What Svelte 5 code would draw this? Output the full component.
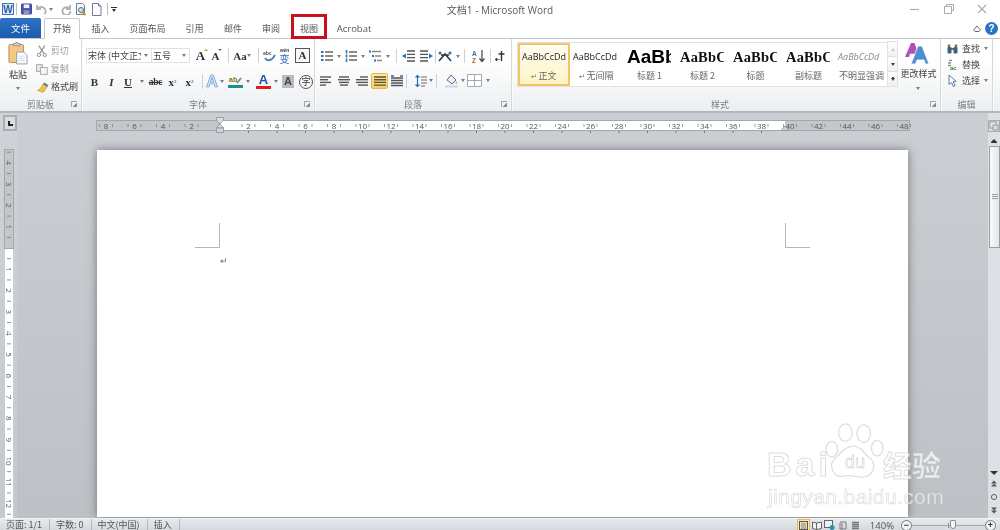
<script>
  const tabs = [
    { t: '插入', w: 39 }, { t: '页面布局', w: 55 }, { t: '引用', w: 39 },
    { t: '邮件', w: 38 }, { t: '审阅', w: 38 }, { t: '视图', w: 38 }
  ];
  const styles = [
    { p: 'AaBbCcDd', l: '正文', k: 'normal', mark: true, on: true },
    { p: 'AaBbCcDd', l: '无间隔', k: 'normal', mark: true },
    { p: 'AaBb', l: '标题 1', k: 'h1' },
    { p: 'AaBbC', l: '标题 2', k: 'h2' },
    { p: 'AaBbC', l: '标题', k: 'h2' },
    { p: 'AaBbC', l: '副标题', k: 'h2' },
    { p: 'AaBbCcDd', l: '不明显强调', k: 'em' }
  ];
  const evens = [];
  for (let v = -8; v <= 48; v += 2) if (v !== 0) evens.push(v);
  const hx = (v) => 124 + v * 14.25;
  const vNums = [-4, -3, -2, -1, 1, 2, 3, 4, 5, 6, 7, 8, 9, 10, 11, 12];
  const vy = (v) => 99 + v * 21.3;
  const vTicks = [];
  for (let v = -4.5; v <= 12.5; v += 1) vTicks.push(v);
  const aligns = [[11, 8, 11, 6], [10, 12, 10, 8], [8, 12, 12, 10]];
</script>

<div class="app">
  <header class="title">
    <div class="qat">
      <svg class="wlogo" width="12" height="12" viewBox="0 0 12 12"><rect x=".5" y=".5" width="11" height="11" fill="#dce8f7" stroke="#3f74b8"/><text x="6" y="9.5" text-anchor="middle" class="wtext">W</text></svg>
      <i class="qsep"></i>
      <svg class="q1" width="11" height="12" viewBox="0 0 12 12"><rect x=".5" y=".5" width="11" height="11" rx="1" fill="#4a57b0" stroke="#333c86"/><rect x="3" y="1" width="6" height="4" fill="#eef1fb"/><rect x="3" y="7.5" width="6" height="4" fill="#8d97c8"/></svg>
      <svg class="q2" width="13" height="11" viewBox="0 0 13 11"><path d="M3 1v4h4M3.5 4.5C6 2 10 2.5 11.5 6c.5 1.5 0 3-1 4" fill="none" stroke="#aeb1b5" stroke-width="1.8"/></svg>
      <i class="caret q3"></i>
      <svg class="q4" width="11" height="11" viewBox="0 0 11 11"><path d="M9 1v4H5M8.5 4.5A4 4 0 1 0 9.5 7" fill="none" stroke="#aeb1b5" stroke-width="1.8"/></svg>
      <svg class="q5" width="13" height="13" viewBox="0 0 13 13"><path d="M2.5.5h6l2 2v9h-8z" fill="#f6f7f9" stroke="#6d7d93"/><circle cx="7" cy="7" r="2.5" fill="#cfe0f2" stroke="#5d6a7c"/><path d="M8.5 9l3 3" stroke="#c99330" stroke-width="2"/></svg>
      <svg class="q6" width="11" height="13" viewBox="0 0 11 13"><path d="M1.5.5h6l2.5 2.5v9.5h-8.5z" fill="#fff" stroke="#6d7d93"/><path d="M7.5.5v2.5h2.5" fill="#dfe6ef" stroke="#6d7d93"/></svg>
      <i class="qsep q7"></i>
      <span class="qmore"><b></b><i class="caret dark"></i></span>
    </div>
    <div class="doc">文档1 - Microsoft Word</div>
    <div class="win">
      <svg width="10" height="10" viewBox="0 0 10 10" class="wmin"><path d="M0 5.5h9" stroke="#a9abae" stroke-width="1.2"/></svg>
      <svg width="10" height="10" viewBox="0 0 10 10" class="wmax"><path d="M2.5 2.5V.5h7v6H7.5M.5 2.5h7v7h-7z" fill="#fff" stroke="#a9abae"/></svg>
      <svg width="10" height="10" viewBox="0 0 10 10" class="wclose"><path d="M1 1l8 8M9 1l-8 8" stroke="#a9abae" stroke-width="1.1"/></svg>
    </div>
  </header>

  <nav class="tabs">
    <div class="file">文件</div>
    <div class="home">开始</div>
    {#each tabs as tab}
      <div class="tab" style="width:{tab.w}px">{tab.t}</div>
    {/each}
    <div class="tab acro">Acrobat</div>
    <div class="tabend">
      <svg width="8" height="7" viewBox="0 0 8 7"><path d="M.5 5L4 1l3.5 4-1.5 1.5H2z" fill="none" stroke="#666"/></svg>
      <span class="help">?</span>
    </div>
  </nav>

  <section class="ribbon">
    <div class="grp clip">
      <div class="body cliprow">
        <div class="paste">
          <svg width="20" height="24" viewBox="0 0 22 25"><rect x="1" y="3" width="16" height="20" rx="1.5" fill="#f4c886" stroke="#b38b4c"/><path d="M6 4V2h2.5V.8h2V2H13v2.5H6z" fill="#cdd2d8" stroke="#7f8790" stroke-width=".8"/><path d="M9.5 11.5h8l3.5 3.5v9.5H9.5z" fill="#fdfdfe" stroke="#8d99a8"/><path d="M11.5 16h7M11.5 18.5h7M11.5 21h7" stroke="#ccd3db"/></svg>
          <span class="pl">粘贴</span>
          <i class="caret"></i>
        </div>
        <div class="clipcol">
          <div class="cr off">
            <svg width="12" height="12" viewBox="0 0 12 12"><path d="M3 .5l5 8M9 .5l-5 8" stroke="#8e9196" stroke-width="1.2"/><circle cx="3" cy="10" r="1.7" fill="none" stroke="#8e9196"/><circle cx="9" cy="10" r="1.7" fill="none" stroke="#8e9196"/></svg>
            <span>剪切</span>
          </div>
          <div class="cr off">
            <svg width="12" height="12" viewBox="0 0 12 12"><rect x=".5" y="1.5" width="6" height="7" fill="#e8e9eb" stroke="#a7a9ac"/><rect x="4.5" y="4.5" width="7" height="7" fill="#f7f7f8" stroke="#a7a9ac"/></svg>
            <span>复制</span>
          </div>
          <div class="cr on">
            <svg width="13" height="12" viewBox="0 0 13 12" class="brush"><path d="M7.5 1.5l4 3-1.5 1.5-4-3z" fill="#5a6f8c"/><path d="M6 3l4 3-3.5 5c-2 .5-4-.5-6-2 2 0 3.5-2 5.5-6z" fill="#eac54a" stroke="#a98d2c" stroke-width=".6"/></svg>
            <span>格式刷</span>
          </div>
        </div>
      </div>
      <div class="foot"><span>剪贴板</span><i class="launch"></i></div>
    </div>

    <div class="grp font">
      <div class="body rows">
        <div class="r1">
          <div class="combo c1"><span>宋体 (中文正文</span><i class="caret"></i></div>
          <div class="combo c2"><span>五号</span><i class="caret"></i></div>
          <span class="ic w17 serif big">A<i class="up"></i></span>
          <span class="ic w15 serif mid2">A<i class="dn"></i></span>
          <i class="vs"></i>
          <span class="ic w18 serif aa">Aa</span><i class="caret cm"></i>
          <i class="vs vs-abc"></i>
          <svg class="ic16" width="16" height="14" viewBox="0 0 16 14"><text x="2" y="6" class="tiny">abc</text><path d="M4 9c2 3 6 4 10-3" fill="none" stroke="#4c84c4" stroke-width="2"/></svg>
          <span class="ic w17 wen"><small>wén</small><b>变</b></span>
          <span class="abox">A</span>
        </div>
        <div class="r2">
          <span class="ic w17 serif b">B</span>
          <span class="ic w17 serif it">I</span>
          <span class="ic w16 serif und">U</span><i class="caret cs"></i>
          <span class="ic w17 serif strike">abc</span>
          <span class="ic w17 serif xs">x<sub>2</sub></span>
          <span class="ic w17 serif xs">x<sup>2</sup></span>
          <i class="vs v2"></i>
          <span class="ic w16 fx">A</span><i class="caret cs2"></i>
          <svg class="hl" width="15" height="15" viewBox="0 0 15 15"><text x="1" y="8" class="abtxt">ab</text><path d="M9 9l4-5" stroke="#7e8a96" stroke-width="2"/><rect x="0" y="11" width="15" height="3" fill="#1d8f8d"/></svg>
          <i class="caret cs3"></i>
          <span class="fc"><b>A</b><i></i></span><i class="caret cs4"></i>
          <span class="agray">A</span>
          <span class="circ">字</span>
        </div>
      </div>
      <div class="foot"><span>字体</span><i class="launch"></i></div>
    </div>

    <div class="grp para">
      <div class="body rows">
        <div class="p1">
          <svg class="pi" width="12" height="12" viewBox="0 0 12 12"><path d="M4 2h8M4 6h8M4 10h8" stroke="#666" stroke-width="1.3"/><path d="M0 2h2.5M0 6h2.5M0 10h2.5" stroke="#2f6fb5" stroke-width="2"/></svg><i class="caret pc"></i>
          <svg class="pi pi-ml" width="12" height="12" viewBox="0 0 12 12"><path d="M4 2h8M4 6h8M4 10h8" stroke="#666" stroke-width="1.3"/><path d="M1.5 0v3.5M1.5 4.5v3M1.5 8.5v3.5" stroke="#2f6fb5" stroke-width="1.6"/></svg><i class="caret pc"></i>
          <svg class="pi pi-ml" width="13" height="12" viewBox="0 0 13 12"><path d="M3 1.5h9M6 6h6M8 10.5h5" stroke="#888" stroke-width="1.3"/><path d="M0 1.5h2M3 6h2M5 10.5h2" stroke="#2f6fb5" stroke-width="1.8"/></svg><i class="caret pc"></i>
          <i class="vs"></i>
          <svg class="pi2" width="13" height="12" viewBox="0 0 13 12"><path d="M5 1h8M5 4.3h8M5 7.6h8M5 11h8" stroke="#555" stroke-width="1.3"/><path d="M4 3.5L0 6l4 2.5z" fill="#2f6fb5"/></svg>
          <svg class="pi2 pi2b" width="13" height="12" viewBox="0 0 13 12"><path d="M0 1h8M0 4.3h8M0 7.6h8M0 11h8" stroke="#555" stroke-width="1.3"/><path d="M9 3.5L13 6 9 8.5z" fill="#2f6fb5"/></svg>
          <i class="vs tight"></i>
          <svg class="pi3" width="14" height="11" viewBox="0 0 14 11"><path d="M1 10l6-7 6 7M3 4h8" fill="none" stroke="#333" stroke-width="1.5"/><circle cx="2" cy="2" r="1.5" fill="#2f6fb5"/><circle cx="12" cy="2" r="1.5" fill="#2f6fb5"/></svg><i class="caret pc"></i>
          <i class="vs"></i>
          <svg class="pi4" width="13" height="14" viewBox="0 0 13 14"><text x="0" y="6.5" class="az a">A</text><text x="0" y="13.5" class="az z">Z</text><path d="M10 1v11M7.5 9.5l2.5 3 2.5-3" fill="none" stroke="#444" stroke-width="1.2"/></svg>
          <i class="vs"></i>
          <svg class="pi5" width="10" height="12" viewBox="0 0 10 12"><path d="M6.5 1v10M3.5 4h6" stroke="#333" stroke-width="1.4"/><path d="M2 8L0 9.5 2 11zM2 9.5h3" fill="#333" stroke="#333" stroke-width=".6"/></svg>
        </div>
        <div class="p2">
          {#each aligns as a, n}
            <svg class="al" width="12" height="10" viewBox="0 0 12 10">
              {#each a as ww, j}
                <path d="M{n === 0 ? 0 : n === 1 ? (12 - ww) / 2 : 12 - ww} {1 + j * 2.7}h{ww}" stroke="#555" stroke-width="1.4"/>
              {/each}
            </svg>
          {/each}
          <span class="jbox"><svg width="12" height="10" viewBox="0 0 12 10"><path d="M0 1h12M0 3.7h12M0 6.4h12M0 9.1h12" stroke="#5d5330" stroke-width="1.4"/></svg></span>
          <svg class="al dist" width="12" height="12" viewBox="0 0 12 12"><path d="M0 3h12M0 5.5h12M0 8h12M0 10.5h12" stroke="#555" stroke-width="1.3"/><path d="M0 1h3M9 1h3" stroke="#2f6fb5" stroke-width="1.4"/></svg>
          <i class="vs v3"></i>
          <svg class="sp" width="12" height="14" viewBox="0 0 12 14"><path d="M2.5 1.5v11M.5 3.5l2-2 2 2M.5 10.5l2 2 2-2" fill="none" stroke="#2f6fb5" stroke-width="1.2"/><path d="M6 3h6M6 6h6M6 9h6M6 12h4" stroke="#666" stroke-width="1.2"/></svg><i class="caret pc"></i>
          <i class="vs v3"></i>
          <svg class="fill" width="15" height="15" viewBox="0 0 15 15"><path d="M3 7l4-5 5 5-4 4z" fill="#e7edf4" stroke="#5b6d82"/><path d="M12 8c1.5 2 1.5 3 .5 3s-1.5-1-.5-3z" fill="#e6a63a"/><rect x="1" y="12.5" width="13" height="2" fill="#c4d8ee"/></svg><i class="caret pc"></i>
          <svg class="bd" width="15" height="13" viewBox="0 0 15 13"><path d="M.5.5h14v12H.5zM7.5.5v12M.5 6.5h14" fill="#fff" stroke="#a5aab0"/></svg><i class="caret pc"></i>
        </div>
      </div>
      <div class="foot"><span>段落</span><i class="launch"></i></div>
    </div>

    <div class="grp sty">
      <div class="body styrow">
        <div class="gallery">
          {#each styles as s}
            <div class="item" class:on={s.on}>
              <div class="prev {s.k}">{s.p}</div>
              <div class="lab">{#if s.mark}<i class="mk">↵</i>{/if}{s.l}</div>
            </div>
          {/each}
          <div class="gscroll">
            <span class="sb"><i class="ctri off2"></i></span>
            <span class="sb"><i class="ctri"></i></span>
            <span class="sb"><i class="ctri bar"></i></span>
          </div>
        </div>
        <div class="change">
          <svg width="26" height="23" viewBox="0 0 26 23"><path d="M1 15L7 1h3.5l5 14h-3l-1-3.2H6L5 15z" fill="#b050b8"/><path d="M7 22L14 4h4l7 18h-3.6l-1.4-4h-7l-1.5 4z" fill="#4f8ed0" stroke="#fff" stroke-width=".8"/></svg>
          <span>更改样式</span>
          <i class="caret"></i>
        </div>
      </div>
      <div class="foot sfoot"><span>样式</span><i class="launch"></i></div>
    </div>

    <div class="grp edit">
      <div class="body editcol">
        <div class="er">
          <svg width="11" height="11" viewBox="0 0 11 11"><rect x=".5" y="4" width="4" height="6.5" rx="1" fill="#3d5f8c"/><rect x="6.5" y="4" width="4" height="6.5" rx="1" fill="#3d5f8c"/><path d="M4 6h3" stroke="#7b6a30" stroke-width="2"/><path d="M2 4V1.5M9 4V1.5" stroke="#8d6d2c" stroke-width="2.4"/></svg>
          <span>查找</span><i class="caret"></i>
        </div>
        <div class="er">
          <svg width="11" height="11" viewBox="0 0 11 11"><path d="M2 1.5h3M1 4h3M1 6.5h3" stroke="#8d9095" stroke-width="1.4"/><text x="3" y="10.5" class="ac">ac</text></svg>
          <span>替换</span>
        </div>
        <div class="er">
          <svg width="11" height="13" viewBox="0 0 11 13"><path d="M2 1v9.5l2.5-2 1.8 4 1.7-.8-1.8-3.9 3-.3z" fill="#fff" stroke="#5b7fa8"/></svg>
          <span>选择</span><i class="caret"></i>
        </div>
      </div>
      <div class="foot"><span>编辑</span></div>
    </div>
    <div class="rest"></div>
  </section>

  <main class="work">
    <aside class="vcol">
      <div class="tabstop"><span></span></div>
      <svg class="vruler" width="10" height="369" viewBox="0 0 10 369">
        <rect x=".5" y=".5" width="9" height="99" fill="#c3c6ca" stroke="#a3a7ac"/>
        <rect x="1" y="100" width="8" height="269" fill="#fff"/>
        {#each vTicks as v}
          <path d="M3 {vy(v)}h4" stroke="#777" stroke-width=".8"/>
        {/each}
        {#each vNums as v}
          <text x="5" y={vy(v)} class="vn" transform="rotate(90 5 {vy(v)})">{Math.abs(v)}</text>
        {/each}
      </svg>
    </aside>

    <div class="mid">
      <svg class="hruler" width="814" height="13" viewBox="0 0 814 13">
        <rect x=".5" y=".5" width="813" height="10" fill="#c3c6ca" stroke="#a3a7ac"/>
        <rect x="124" y="1" width="565" height="9" fill="#fff"/>
        {#each evens as v}
          <path d="M{hx(v) - 6.5} 4v3M{hx(v) + 6.5} 4v3" stroke="#777" stroke-width=".7"/>
          <text x={hx(v)} y="8.5" class="hn">{Math.abs(v)}</text>
        {/each}
        {#each Array.from({ length: 19 }, (_, n) => n + 1) as n}
          <path d="M{hx(n * 2)} 11v2" stroke="#777"/>
        {/each}
        <path d="M120.5 -2.5h7v2.5l-3.5 4-3.5-4z" fill="#dcdfe2" stroke="#90949a" stroke-width=".8"/>
        <path d="M120.5 8l3.5-4 3.5 4z" fill="#dcdfe2" stroke="#90949a" stroke-width=".8"/>
        <rect x="120.5" y="8" width="7" height="4.5" fill="#cfd2d6" stroke="#90949a" stroke-width=".8"/>
        <path d="M685 10.5l4-4.5 4 4.5z" fill="#cfd2d6" stroke="#90949a" stroke-width=".8"/>
      </svg>
      <article class="page">
        <div class="marks"><i class="cm1"></i><i class="cm2"></i></div>
        <div class="para-mark">↵</div>
      </article>
    </div>

    <aside class="scroll">
      <div class="rtoggle"><svg width="10" height="10" viewBox="0 0 10 10"><rect x="1" y="1" width="6" height="6" fill="#f1e6ea" stroke="#8a8d92" stroke-width=".8"/><rect x="4" y="4" width="5" height="5" fill="#e8d8dd" stroke="#8a8d92" stroke-width=".8"/></svg></div>
      <div class="arrow up2"><i></i></div>
      <div class="track">
        <div class="thumb"><i></i></div>
      </div>
      <div class="arrow dn2"><i></i></div>
      <div class="nav">
        <svg width="8" height="8" viewBox="0 0 8 8"><path d="M4 .5L1 3.5h6zM4 3.5L1 6.5h6z" fill="#555"/></svg>
        <svg width="8" height="8" viewBox="0 0 8 8"><circle cx="4" cy="4" r="2.6" fill="none" stroke="#666"/></svg>
        <svg width="8" height="8" viewBox="0 0 8 8"><path d="M4 7.5L1 4.5h6zM4 4.5L1 1.5h6z" fill="#555"/></svg>
      </div>
    </aside>
  </main>

  <footer class="status">
    <span class="sitem">页面: 1/1</span>
    <span class="sitem">字数: 0</span>
    <span class="sitem">中文(中国)</span>
    <span class="sitem">插入</span>
    <div class="views">
      <span class="vbtn act"><svg width="9" height="9" viewBox="0 0 9 9"><rect x=".5" y=".5" width="8" height="8" fill="#e8e0c0" stroke="#555"/><path d="M2 3h5M2 5h5M2 7h5" stroke="#888"/></svg></span>
      <span class="vbtn"><svg width="10" height="9" viewBox="0 0 10 9"><path d="M.5 1l4 1v6.5l-4-1zM9.5 1l-5 1v6.5l5-1z" fill="#eef0f3" stroke="#666"/></svg></span>
      <span class="vbtn"><svg width="11" height="10" viewBox="0 0 11 10"><rect x=".5" y=".5" width="8" height="7" fill="#eef0f3" stroke="#666"/><circle cx="8" cy="7.5" r="2.5" fill="#2a8fa8"/></svg></span>
      <span class="vbtn"><svg width="9" height="9" viewBox="0 0 9 9"><path d="M2 1h6v7H2M1 3h4M1 5h4M1 7h4" fill="none" stroke="#777"/></svg></span>
      <span class="vbtn"><svg width="9" height="9" viewBox="0 0 9 9"><path d="M1 1.5h7M1 3.5h7M1 5.5h7M1 7.5h7" stroke="#777" stroke-width="1.3"/></svg></span>
    </div>
    <span class="pct">140%</span>
    <div class="zoom">
      <span class="zb">−</span>
      <div class="sl"><i class="ctr"></i><i class="th"></i></div>
      <span class="zb">+</span>
    </div>
  </footer>

  <div class="redbox"></div>

  <div class="wm">
    <div class="wm1">
      <span class="bai">Bai</span>
      <svg class="paw" width="62" height="56" viewBox="0 0 62 58">
        <ellipse cx="7" cy="27" rx="6" ry="8" />
        <ellipse cx="21" cy="10" rx="7" ry="9" />
        <ellipse cx="40" cy="11" rx="7" ry="9" />
        <ellipse cx="54" cy="26" rx="6" ry="8" />
        <path d="M30 24c8 0 10 8 16 12 6 4 7 18-6 20-6 1-13-3-20-1-12 2-17-11-10-18 6-5 10-13 20-13z" />
        <text x="31" y="47" text-anchor="middle" class="du">du</text>
      </svg>
      <span class="jy">经验</span>
    </div>
    <div class="wm2">jingyan.baidu.com</div>
  </div>
</div>

<style>
  :global(body) { margin: 0; background: #fff; }
  .app {
    position: relative; width: 1000px; height: 530px; overflow: hidden; background: #fff;
    display: flex; flex-direction: column; color: #555;
    font-family: "Noto Sans CJK SC", "Open Sans", sans-serif; font-size: 9px;
    filter: blur(.35px);
  }
  i { display: block; font-style: normal; }

  .title { height: 18px; display: flex; align-items: center; position: relative; flex: none; }
  .qat { display: flex; align-items: center; padding-left: 2px; width: 300px; flex: none; box-sizing: border-box; }
  .qat svg { flex: none; }
  .wtext { font: bold 10px "Liberation Sans", sans-serif; fill: #2b5ea8; }
  .qsep { width: 1px; height: 12px; background: #b9bcc0; margin-left: 2px; }
  .q1 { margin-left: 4px; }
  .q2 { margin-left: 2px; }
  .q3 { margin-left: 2px; }
  .q4 { margin-left: 8px; }
  .q5 { margin-left: 2px; }
  .q6 { margin-left: 4px; }
  .q7 { margin-left: 5px; }
  .qmore { margin-left: 3px; display: flex; flex-direction: column; gap: 1px; align-items: center; }
  .qmore b { width: 6px; height: 1px; background: #333; display: block; }
  .caret { width: 0; height: 0; border: 2.5px solid transparent; border-top: 3px solid #7a7d81; border-bottom: 0; flex: none; }
  .caret.dark { border-top-color: #333; }
  .doc { width: 400px; flex: none; text-align: center; font: 10px "Open Sans", "Noto Sans CJK SC", sans-serif; color: #5a5a5a; }
  .win { flex: 1; display: flex; align-items: center; }
  .wmin { margin-left: 210px; }
  .wmax { margin-left: 24px; }
  .wclose { margin-left: 23px; }

  .tabs { height: 21px; display: flex; align-items: flex-end; flex: none; position: relative; z-index: 1; }
  .file {
    width: 41px; height: 20px; margin-bottom: 1px; padding-bottom: 1px; box-sizing: border-box; background: linear-gradient(#2e72c6, #1b5cab); color: #fff; border-radius: 2px 2px 0 0;
    display: flex; align-items: center; justify-content: center; font-size: 9.5px;
  }
  .home {
    width: 36px; height: 21px; margin-left: 3px; padding-bottom: 2px; background: #fff; border: 1px solid #c7cace; border-bottom: 0; border-radius: 2px 2px 0 0;
    box-sizing: border-box; display: flex; align-items: center; justify-content: center;
  }
  .tab { height: 20px; padding-bottom: 2px; box-sizing: border-box; display: flex; align-items: center; justify-content: center; flex: none; }
  .home + .tab { margin-left: 1px; }
  .acro { margin-left: 9px; width: 34px; font: 9.5px "Open Sans", sans-serif; }
  .tabend { margin-left: auto; height: 20px; padding: 0 2px 2px 0; box-sizing: border-box; display: flex; align-items: center; gap: 4px; }
  .help {
    width: 13px; height: 13px; border-radius: 50%; background: #2a72c8; color: #fff; font: bold 10px/13px "Liberation Sans", sans-serif; text-align: center;
  }

  .ribbon {
    height: 75px; flex: none; display: flex; box-sizing: border-box; border-top: 1px solid #c2c5c9; border-bottom: 2px solid #b3b6ba;
    background: linear-gradient(#fff 30%, #eceef0);
    margin-top: -1px;
  }
  .grp { display: flex; flex-direction: column; box-sizing: border-box; border-right: 1px solid #d6d9dc; flex: none; box-shadow: 1px 0 0 #fafbfb; }
  .clip { width: 82px; }
  .font { width: 233px; }
  .para { width: 197px; }
  .sty { width: 429px; }
  .edit { width: 52px; }
  .rest { flex: 1; }
  .body { height: 59px; flex: none; }
  .foot { height: 13px; display: flex; align-items: center; justify-content: center; position: relative; color: #7b7e82; }
  .sfoot { padding-right: 12px; }
  .launch { position: absolute; right: 4px; top: 3px; width: 5px; height: 5px; border: 1px solid #a4a7ab; border-width: 1px 0 0 1px; background: linear-gradient(135deg, transparent 55%, #8a8d91 55%); }

  .cliprow { display: flex; }
  .paste { width: 36px; display: flex; flex-direction: column; align-items: center; padding-top: 2px; box-sizing: border-box; }
  .pl { margin-top: 3px; line-height: 13px; color: #444; }
  .paste .caret { margin-top: 6px; }
  .clipcol { display: flex; flex-direction: column; padding-top: 5px; gap: 5px; }
  .cr { display: flex; align-items: center; height: 13px; width: 42px; justify-content: flex-end; }
  .cr span { width: 28px; }
  .cr svg { margin-right: 3px; }
  .off { color: #9c9ea1; }
  .on { color: #444; }
  .cr.on span { width: 27px; white-space: nowrap; }
  .cr.on svg { margin-right: 1px; }

  .rows { display: flex; flex-direction: column; }
  .font .rows { padding-left: 4px; }
  .r1, .r2, .p1, .p2 { display: flex; align-items: center; }
  .r1 { height: 17px; margin-top: 8px; }
  .r2 { height: 17px; margin-top: 9px; }
  .combo { height: 15px; box-sizing: border-box; border: 1px solid #dfe1e4; background: #fff; display: flex; align-items: center; color: #444; overflow: hidden; }
  .combo span { flex: 1; white-space: nowrap; overflow: hidden; padding-left: 1px; }
  .c1 { width: 66px; }
  .c2 { width: 39px; margin-left: -1px; }
  .combo .caret { margin: 0 3px; }
  .ic { display: flex; align-items: center; justify-content: center; flex: none; position: relative; height: 16px; color: #333; }
  .w15 { width: 15px; } .w16 { width: 16px; } .w17 { width: 17px; } .w18 { width: 18px; }
  .serif { font-family: "Liberation Serif", serif; font-weight: bold; }
  .big { font-size: 13px; margin-left: 2px; }
  .mid2 { font-size: 11px; margin-left: -1px; }
  .up, .dn { position: absolute; right: 1px; top: 1px; width: 0; height: 0; border: 2px solid transparent; }
  .up { border-bottom: 2.5px solid #d58a2b; border-top: 0; }
  .dn { border-top: 2.5px solid #3878c0; border-bottom: 0; }
  .vs { width: 1px; height: 15px; background: #cfd2d5; flex: none; margin: 0 4px; }
  .r1 .vs { margin: 0 5px 0 5px; }
  .r1 .aa { margin-left: -3px; }
  .r1 .cm { margin-left: -2px; margin-right: 3px; }
  .r1 .vs-abc { margin: 0 2px 0 4px; }
  .aa { font-size: 11px; }
  .tiny { font: bold 5px "Liberation Sans", sans-serif; fill: #555; }
  .ic16 { flex: none; }
  .wen { color: #2d6cb5; flex-direction: column; margin-left: -1px; }
  .wen small { display: block; height: 6px; font: bold 5px/5px "Liberation Sans", sans-serif; color: #444; overflow: hidden; }
  .wen b { display: block; font-size: 10px; line-height: 10px; height: 10px; font-weight: normal; }
  .abox { width: 13px; height: 13px; border: 1px solid #555; background: #f7f8f9; font: bold 11px/13px "Liberation Serif", serif; text-align: center; color: #333; margin-left: 2px; }
  .b { font-size: 11px; }
  .it { font-style: italic; font-size: 11px; }
  .und { font-size: 11px; text-decoration: underline; }
  .cs { margin-left: 4px; margin-right: 3px; }
  .strike { font-size: 9.5px; text-decoration: line-through; letter-spacing: -.2px; }
  .xs { font-size: 11px; }
  .xs sub, .xs sup { font-size: 5px; color: #3878c0; line-height: 0; }
  .v2 { margin: 0 1px 0 4px; }
  .fx { font: bold 16px "Liberation Sans", sans-serif; color: #d4e6f8; -webkit-text-stroke: .7px #5a9ad8; }
  .cs2 { margin-right: 4px; margin-left: 0; }
  .hl { flex: none; }
  .abtxt { font: bold 7px "Liberation Sans", sans-serif; fill: #8a6d10; }
  .cs3 { margin: 0 6px 0 3px; }
  .fc { display: flex; flex-direction: column; align-items: center; width: 15px; }
  .fc b { font: bold 13px/12px "Liberation Sans", sans-serif; color: #2850a0; }
  .fc i { width: 15px; height: 3px; background: #e01b24; }
  .cs4 { margin: 0 4px 0 3px; }
  .agray { width: 12px; height: 13px; background: #b9bbbe; font: bold 11px/13px "Liberation Sans", sans-serif; color: #444; text-align: center; }
  .circ { width: 14px; height: 14px; box-sizing: border-box; border-radius: 50%; border: 1px solid #555; font-size: 9px; line-height: 11px; text-align: center; color: #333; margin-left: 5px; }

  .para .rows { padding-left: 6px; }
  .p1 { height: 16px; margin-top: 9px; }
  .p2 { height: 17px; margin: 8px 0 0 -1px; }
  .pi { flex: none; }
  .pi-ml { margin-left: -1px; }
  .pc { margin: 0 5px 0 4px; }
  .p1 .vs { margin: 0 4px 0 1px; height: 14px; }
  .p1 .vs.tight { margin-right: 2px; }
  .pi2 { margin-right: 4px; flex: none; margin-left: 1px; }
  .pi2b { margin-right: 1px; }
  .pi3 { flex: none; }
  .pi3 + .pc { margin-right: 3px; }
  .pi4 { flex: none; margin-left: 3px; margin-right: 4px; }
  .pi5 { flex: none; margin-left: 0; }
  .az { font: bold 6.5px "Liberation Sans", sans-serif; }
  .a { fill: #2f6fb5; } .z { fill: #c85a20; }
  .al { flex: none; margin-right: 6px; }
  .jbox { width: 17px; height: 16px; box-sizing: border-box; border: 1px solid #e3b84e; background: linear-gradient(#fde9a8, #f8cd6a); border-radius: 2px; display: flex; align-items: center; justify-content: center; margin-left: -3px; margin-right: 3px; flex: none; }
  .dist { margin-right: 3px; }
  .v3 { margin: 0 8px 0 0; height: 14px; }
  .sp { flex: none; }
  .sp + .pc { margin: 0 3px 0 2px; }
  .fill { flex: none; margin-left: -1px; }
  .fill + .pc { margin: 0 2px 0 2px; }
  .bd { flex: none; }

  .styrow { display: flex; padding: 3px 0 0 5px; box-sizing: border-box; }
  .gallery { width: 381px; height: 45px; box-sizing: border-box; border: 1px solid #dfe1e4; background: #fff; display: flex; position: relative; padding-right: 10px; }
  .item { width: 53px; flex: none; height: 43px; box-sizing: border-box; overflow: hidden; text-align: center; display: flex; flex-direction: column; }
  .item.on { width: 52px; border: 2px solid #f1c667; background: linear-gradient(#fffdf3, #fff3c4); border-radius: 1px; }
  .item.on .prev { padding-top: 3px; padding-left: 2px; }
  .item.on .lab { margin-top: -1px; }
  .prev { height: 25px; padding-top: 5px; padding-left: 3px; box-sizing: border-box; white-space: nowrap; color: #222; line-height: 18px; text-align: left; overflow: hidden; }
  .normal { font: 9px/18px "Open Sans", sans-serif; }
  .h1 { font: bold 19px/18px "Liberation Sans", sans-serif; color: #000; padding-left: 4px; clip-path: inset(0 5px 0 0); }
  .h2 { font: bold 14.5px/18px "Liberation Serif", serif; padding-left: 4px; color: #111; letter-spacing: .2px; clip-path: inset(0 5px 0 0); }
  .em { font: italic 9px/18px "Open Sans", sans-serif; color: #888; }
  .lab { height: 14px; line-height: 14px; color: #666; display: flex; justify-content: center; margin-top: 1px; }
  .mk { font-size: 7px; margin-right: 1px; }
  .gscroll { position: absolute; right: -1px; top: -1px; width: 11px; height: 45px; display: flex; flex-direction: column; }
  .sb { flex: 1; border: 1px solid #dfe1e4; margin-top: -1px; background: linear-gradient(#fff, #eef0f2); display: flex; align-items: center; justify-content: center; }
  .ctri { width: 0; height: 0; border: 2.5px solid transparent; border-top: 3px solid #444; border-bottom: 0; }
  .off2 { border-top: 0; border-bottom: 3px solid #c9cbce; }
  .bar { box-shadow: 0 -2px 0 -1px #444; }
  .change { width: 40px; display: flex; flex-direction: column; align-items: center; color: #444; white-space: nowrap; }
  .change svg { margin-right: 3px; }
  .change span { line-height: 12px; margin: 3px 0 0 1px; }
  .change .caret { margin-top: 7px; }

  .editcol { display: flex; flex-direction: column; padding: 1px 0 0 6px; box-sizing: border-box; }
  .er { height: 16px; display: flex; align-items: center; color: #444; }
  .er svg { width: 11px; margin-right: 4px; flex: none; }
  .er .caret { margin-left: 4px; }
  .ac { font: bold 6px "Liberation Sans", sans-serif; fill: #2d8a3e; }

  .work { height: 405px; flex: none; display: flex; background: linear-gradient(#cbcfd3, #bdc0c4); overflow: hidden; }
  .vcol { width: 17px; flex: none; background: linear-gradient(#cfd3d7, #c5c8cc); position: relative; }
  .tabstop { width: 14px; height: 16px; box-sizing: border-box; margin: 2px 0 0 3px; border: 2px solid #a9adb2; background: #d9dce0; display: flex; align-items: center; justify-content: center; }
  .tabstop span { width: 5px; height: 5px; border: solid #222; border-width: 0 0 2px 2px; box-sizing: border-box; }
  .vruler { display: block; margin: 18px 0 0 4px; }
  .vn { font: 8px "Open Sans", sans-serif; fill: #555; text-anchor: middle; dominant-baseline: central; }

  .mid { flex: 1; padding: 7px 0 0 79px; box-sizing: border-box; min-width: 0; }
  .hruler { display: block; overflow: visible; }
  .hn { font: 8px "Open Sans", sans-serif; fill: #555; text-anchor: middle; }
  .page { width: 811px; height: 367px; margin: 17px 0 0 1px; background: #fff; box-shadow: 0 0 9px rgba(60, 64, 70, .6); position: relative; }
  .marks { display: flex; justify-content: space-between; padding: 73px 98px 0 98px; }
  .cm1 { width: 24px; height: 24px; border-right: 1px solid #b5b7ba; border-bottom: 1px solid #b5b7ba; }
  .cm2 { width: 24px; height: 24px; border-left: 1px solid #b5b7ba; border-bottom: 1px solid #b5b7ba; }
  .para-mark { margin: 8px 0 0 123px; font-size: 9px; line-height: 9px; color: #666; }

  .scroll { width: 12px; flex: none; background: #dde1e6; display: flex; flex-direction: column; align-items: center; }
  .rtoggle { width: 12px; height: 12px; flex: none; margin-top: 7px; box-sizing: border-box; border: 1px solid #a9adb2; background: #d8dbde; display: flex; align-items: center; justify-content: center; }
  .arrow { width: 12px; flex: none; display: flex; align-items: center; justify-content: center; }
  .up2 { margin-top: 2px; height: 12px; }
  .up2 i { width: 0; height: 0; border: 3.5px solid transparent; border-bottom: 3.5px solid #333; border-top: 0; box-shadow: 0 1px 0 #333; }
  .dn2 i { width: 0; height: 0; border: 4px solid transparent; border-top: 4px solid #333; border-bottom: 0; }
  .track { height: 322px; flex: none; width: 100%; box-sizing: border-box; }
  .thumb { width: 11px; height: 102px; margin-left: 1px; box-sizing: border-box; border: 1px solid #9a9ea3; background: linear-gradient(90deg, #f8f9fa, #e4e7ea); display: flex; align-items: center; justify-content: center; }
  .thumb i { width: 6px; height: 6px; background: repeating-linear-gradient(#9da1a6 0 1px, #e8eaec 1px 2px); }
  .dn2 { height: 12px; margin-top: -1px; }
  .nav { display: flex; flex-direction: column; align-items: center; gap: 5px; margin-top: 1px; }

  .status { height: 13px; flex: none; box-sizing: border-box; border-top: 1px solid #f0f2f4; padding-right: 4px; display: flex; align-items: center; background: linear-gradient(#e6e9ed, #d4d8dd); color: #555; }
  .sitem { padding: 0 7px 0 6px; height: 13px; line-height: 12px; border-right: 1px solid #b3b7bc; }
  .views { margin-left: auto; display: flex; align-items: center; }
  .vbtn { width: 13px; height: 13px; box-sizing: border-box; display: flex; align-items: center; justify-content: center; }
  .vbtn.act { border: 1px solid #e5b94f; background: #fcecb8; }
  .pct { width: 32px; text-align: right; font: 9.5px "Open Sans", sans-serif; margin-right: 7px; color: #555; }
  .zoom { display: flex; align-items: center; width: 95px; }
  .zb { width: 11px; height: 11px; box-sizing: border-box; border: 1px solid #777; border-radius: 50%; background: #f4f5f6; font: bold 9px/9px "Liberation Sans", sans-serif; text-align: center; color: #333; flex: none; }
  .sl { width: 73px; height: 1px; background: #a3a7ac; position: relative; }
  .ctr { position: absolute; left: 36px; top: -2px; width: 1px; height: 5px; background: #8f9398; }
  .th { position: absolute; left: 38px; top: -5px; width: 6px; height: 9px; box-sizing: border-box; border: 1px solid #8a8e93; background: #f5f6f7; border-radius: 1px 1px 3px 3px; }

  .redbox { position: absolute; left: 291px; top: 14px; width: 36px; height: 25px; box-sizing: border-box; border: 3px solid #c9101c; z-index: 3; }

  .wm { position: absolute; left: 767px; top: 423px; width: 190px; z-index: 4; pointer-events: none; }
  .wm1 { display: flex; align-items: flex-end; height: 56px; }
  .bai { font: bold 34px/30px "Liberation Sans", sans-serif; color: rgba(255,255,255,.7); -webkit-text-stroke: 1px rgba(190,190,190,.5); letter-spacing: 4px; }
  .paw { margin-left: -8px; flex: none; }
  .paw ellipse, .paw path { fill: rgba(255,255,255,.7); stroke: rgba(190,190,190,.5); stroke-width: 1.3; }
  .du { font: 19px "Liberation Sans", sans-serif; fill: #fff; stroke: rgba(190,190,190,.6); stroke-width: .8; }
  .jy { font: bold 29px/30px "Noto Sans CJK SC", sans-serif; color: rgba(255,255,255,.7); -webkit-text-stroke: 1px rgba(190,190,190,.5); margin-left: -3px; white-space: nowrap; }
  .wm2 { font: 21px/24px "Liberation Sans", sans-serif; color: rgba(255,255,255,.65); -webkit-text-stroke: .7px rgba(190,190,190,.55); margin: 6px 0 0 1px; white-space: nowrap; letter-spacing: .4px; }
</style>
